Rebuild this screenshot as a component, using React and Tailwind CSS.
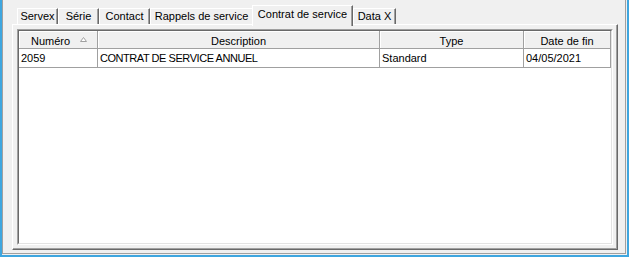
import React from 'react';

const tabs = [
  { label: 'Servex', w: 'w-[41px]' },
  { label: 'Série', w: 'w-[41px]' },
  { label: 'Contact', w: 'w-[51px]' },
  { label: 'Rappels de service', w: 'w-[102px]', noEdge: true },
  { label: 'Contrat de service', w: 'w-[101px]', active: true },
  { label: 'Data X', w: 'w-[43px]' },
];

const columns = [
  { label: 'Numéro', w: 'w-[79px]', sort: true },
  { label: 'Description', w: 'w-[282px]' },
  { label: 'Type', w: 'w-[144px]' },
  { label: 'Date de fin', w: 'w-[87px]' },
];

const rows = [
  { num: '2059', desc: 'CONTRAT DE SERVICE ANNUEL', type: 'Standard', end: '04/05/2021' },
];

function Tab({ tab }) {
  if (tab.active) {
    return (
      <div
        className={`${tab.w} relative z-10 -mb-[2px] flex h-[21px] items-center justify-center border-t border-l border-r border-t-white border-l-white border-r-[#696969] bg-[#f0f0f0] pb-[3px] shadow-[inset_-1px_0_0_#a0a0a0]`}
      >
        {tab.label}
      </div>
    );
  }
  return (
    <div
      className={`${tab.w} flex h-[16px] items-center justify-center border-t border-l border-t-white border-l-white ${
        tab.noEdge ? '' : 'border-r border-r-[#696969] shadow-[inset_-1px_0_0_#a0a0a0]'
      }`}
    >
      {tab.label}
    </div>
  );
}

function SortArrow() {
  return (
    <svg width="7" height="5" viewBox="0 0 7 5" className="mt-[2px] shrink-0">
      <polygon points="3.5,0.5 6.5,4.5 0.5,4.5" fill="#ffffff" stroke="#a0a0a0" strokeWidth="1" />
    </svg>
  );
}

export default function App() {
  return (
    <div className="h-[257px] w-[629px] border-l-2 border-r-2 border-b-2 border-[#3ea6df] bg-[#f0f0f0] font-[family-name:Liberation_Sans,Arial,sans-serif] text-[11px] leading-[13px] text-black">
      <div className="mr-[1px] mb-[1px] flex h-[254px] flex-col border-l border-r border-b border-[#a0a0a0]">
        {/* Tab strip */}
        <div className="flex h-[24px] items-end pl-[14px]">
          {tabs.map((t) => (
            <Tab key={t.label} tab={t} />
          ))}
        </div>

        {/* Tab page */}
        <div className="ml-[9px] flex h-[226px] w-[606px] flex-col border-t border-l border-r border-b border-t-white border-l-white border-r-[#696969] border-b-[#696969] p-[4px] shadow-[inset_-1px_-1px_0_#a0a0a0]">
          {/* List view, sunken */}
          <div className="flex-1 border border-t-[#a0a0a0] border-l-[#a0a0a0] border-r-white border-b-white">
            <div className="h-full border border-t-[#696969] border-l-[#696969] border-r-[#e3e3e3] border-b-[#e3e3e3] bg-white">
              {/* Header */}
              <div className="flex h-[18px]">
                {columns.map((c) =>
                  c.sort ? (
                    <div
                      key={c.label}
                      className={`${c.w} flex items-start justify-between border-r border-b border-[#a0a0a0] bg-[#f0f0f0] pt-[4px] pl-[12px] pr-[10px] shadow-[inset_1px_1px_0_#ffffff]`}
                    >
                      <span>{c.label}</span>
                      <SortArrow />
                    </div>
                  ) : (
                    <div
                      key={c.label}
                      className={`${c.w} flex items-start justify-center border-r border-b border-[#a0a0a0] bg-[#f0f0f0] pt-[4px] shadow-[inset_1px_1px_0_#ffffff]`}
                    >
                      {c.label}
                    </div>
                  )
                )}
              </div>

              {/* Rows */}
              {rows.map((r) => (
                <div key={r.num} className="flex h-[19px]">
                  <div className="w-[79px] border-r border-b border-[#a0a0a0] pt-[3px] pl-[2px]">{r.num}</div>
                  <div className="w-[282px] border-r border-b border-[#a0a0a0] pt-[3px] pl-[2px] tracking-[-0.45px]">
                    {r.desc}
                  </div>
                  <div className="w-[144px] border-r border-b border-[#a0a0a0] pt-[3px] pl-[2px]">{r.type}</div>
                  <div className="w-[87px] border-r border-b border-[#a0a0a0] pt-[3px] pl-[2px]">{r.end}</div>
                </div>
              ))}
            </div>
          </div>
        </div>
      </div>
    </div>
  );
}
